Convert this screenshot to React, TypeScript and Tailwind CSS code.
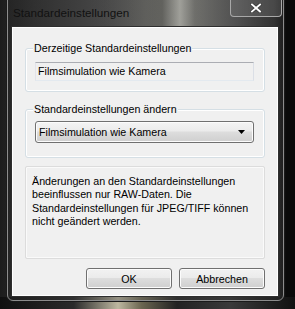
export default function App() {
  return (
    <div
      className="relative w-[295px] h-[309px] overflow-hidden bg-[#0c0c0c]"
      style={{ fontFamily: '"Liberation Sans", Arial, sans-serif' }}
    >
      {/* desktop behind the glass */}
      <div className="absolute inset-0 bg-[linear-gradient(90deg,#1c1c1c_0%,#333_12%,#4a4a4a_35%,#6a6a64_55%,#cfcfc6_61%,#8a8a84_66%,#666_80%,#3a3a3a_93%,#0a0a0a_97%)]" />
      <div className="absolute left-0 right-0 bottom-0 h-[12px] bg-[linear-gradient(90deg,#101010_0%,#2a2a2a_25%,#bdb7a0_40%,#6a6550_48%,#222_60%,#3a3a3a_78%,#111_100%)]" />

      {/* window frame */}
      <div className="absolute left-[7px] top-[-10px] w-[277px] h-[311px] rounded-[6px] border border-[#8c8c8c] bg-[linear-gradient(90deg,rgba(40,40,40,0.55),rgba(90,90,90,0.3)_50%,rgba(40,40,40,0.5))] shadow-[0_0_0_1px_#1a1a1a]">
        <div className="flex items-start h-[35px]">
          <div className="pl-[5px] pt-[15px] text-[11.7px] leading-[14px] text-[#111]">
            Standardeinstellungen
          </div>
          <div className="ml-auto mr-[1px] mt-[9px] w-[52px] h-[17px] rounded-b-[4px] border border-[#a8a8a8] border-t-0 bg-[rgba(140,140,140,0.25)] flex items-start justify-center pt-[3px]">
            <svg width="12" height="10" viewBox="0 0 12 10">
              <path d="M2 1.5 L10 8.5 M10 1.5 L2 8.5" stroke="#3a3a3a" strokeWidth="3.4" strokeLinecap="square" />
              <path d="M2 1.5 L10 8.5 M10 1.5 L2 8.5" stroke="#ffffff" strokeWidth="1.9" strokeLinecap="square" />
            </svg>
          </div>
        </div>

        {/* client area */}
        <div className="ml-[3px] w-[268px] h-[271px] border border-[#2e2e2e] shadow-[inset_0_0_0_1px_#ffffff] bg-[#f0f0f0] px-[13px] pt-[12px] text-[10.7px] text-[#000]">
          {/* group 1 */}
          <div className="relative w-[240px] h-[44px] mt-[9px] rounded-[3px] border border-[#d5dfe5] shadow-[inset_0_0_0_1px_#ffffff] px-[9px] pt-[13px]">
            <div className="absolute left-[7px] top-[-9px] px-[1px] bg-[#f0f0f0] leading-[16px]">
              Derzeitige Standardeinstellungen
            </div>
            <div className="h-[19px] w-[219px] border border-[#abadb3] border-r-[#dbdfe6] border-b-[#e3e9ef] border-l-[#e2e3ea] bg-[#f0f0f0] pl-[2px] leading-[17px]">
              Filmsimulation wie Kamera
            </div>
          </div>

          {/* group 2 */}
          <div className="relative w-[240px] h-[49px] mt-[17px] rounded-[3px] border border-[#d5dfe5] shadow-[inset_0_0_0_1px_#ffffff] px-[9px] pt-[11px]">
            <div className="absolute left-[7px] top-[-9px] px-[1px] bg-[#f0f0f0] leading-[16px]">
              Standardeinstellungen ändern
            </div>
            <div className="h-[22px] w-[219px] rounded-[3px] border border-[#707070] bg-[linear-gradient(180deg,#f4f4f4_0%,#ebebeb_45%,#dddddd_50%,#cfcfcf_100%)] shadow-[inset_0_0_0_1px_#fcfcfc] flex items-center pl-[3px] pr-[8px]">
              <span className="leading-[16px]">Filmsimulation wie Kamera</span>
              <svg className="ml-auto" width="7" height="4" viewBox="0 0 7 4">
                <path d="M0 0 H7 L3.5 4 Z" fill="#000" />
              </svg>
            </div>
          </div>

          {/* info box */}
          <div className="w-[240px] h-[93px] mt-[8px] rounded-[2px] border border-[#dcdcdc] shadow-[inset_0_0_0_1px_#fafafa] pl-[6px] pt-[8px] leading-[13.4px]">
            Änderungen an den Standardeinstellungen
            <br />
            beeinflussen nur RAW-Daten. Die
            <br />
            Standardeinstellungen für JPEG/TIFF können
            <br />
            nicht geändert werden.
          </div>

          {/* buttons */}
          <div className="flex justify-end gap-[7px] mt-[9px] w-[240px]">
            <button className="w-[86px] h-[21px] rounded-[3px] border border-[#707070] bg-[linear-gradient(180deg,#f2f2f2_0%,#ebebeb_45%,#dddddd_50%,#cfcfcf_100%)] shadow-[inset_0_0_0_1px_#fcfcfc] text-[10.7px] leading-[16px]">
              OK
            </button>
            <button className="w-[86px] h-[21px] rounded-[3px] border border-[#707070] bg-[linear-gradient(180deg,#f2f2f2_0%,#ebebeb_45%,#dddddd_50%,#cfcfcf_100%)] shadow-[inset_0_0_0_1px_#fcfcfc] text-[10.7px] leading-[16px]">
              Abbrechen
            </button>
          </div>
        </div>
      </div>
    </div>
  );
}
